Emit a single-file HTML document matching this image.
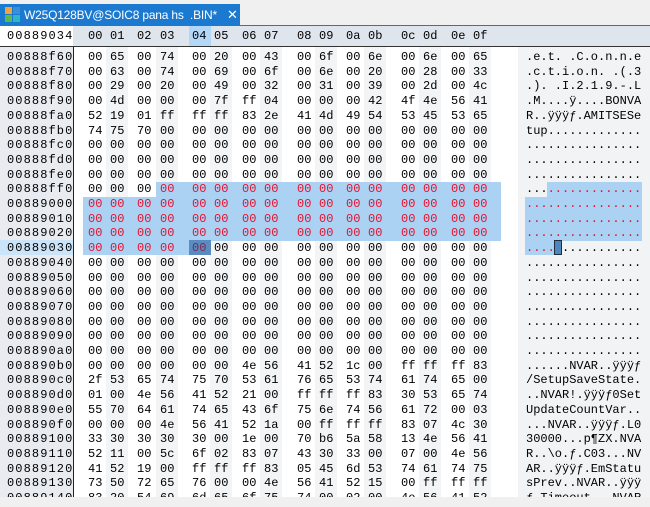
<!DOCTYPE html>
<html><head><meta charset="utf-8"><style>
body{margin:0;width:650px;height:507px;overflow:hidden;background:#fff;position:relative;font-family:"Liberation Mono",monospace;font-size:12px;color:#000}
.abs{position:absolute}
#tabbar{left:0;top:0;width:650px;height:26px;background:#f0f0f0}
#tab{left:0;top:4px;width:240px;height:22px;background:#1b79d0;color:#fff;font-family:"Liberation Sans",sans-serif;font-size:12px;line-height:22px}
#tline{left:0;top:25px;width:650px;height:1px;background:#1b79d0}
#hdr{left:0;top:26px;width:650px;height:20px;background:#dfe5ec;border-bottom:1px solid #333}
#hdr0{left:0;top:26px;width:73px;height:20px;background:#fff;line-height:20px;letter-spacing:1.1px;text-indent:7px}
#addrbg{left:0;top:47px;width:73px;height:460px;background:#e8ecf1;border-right:1px solid #222}
#ascbg{left:518px;top:47px;width:132px;height:460px;background:#f2f3f5}
.st{top:47px;width:22px;height:460px;background:#f2f4f6}
.r{position:absolute;left:0;width:650px;height:14.7px;line-height:14.7px}
.r span{position:absolute;top:0}
.r span:nth-child(1){left:7px;letter-spacing:1.1px}
.r span:nth-child(2){left:88px}.r span:nth-child(3){left:110px}.r span:nth-child(4){left:137px}.r span:nth-child(5){left:160px}
.r span:nth-child(6){left:192px}.r span:nth-child(7){left:214px}.r span:nth-child(8){left:242px}.r span:nth-child(9){left:264px}
.r span:nth-child(10){left:297px}.r span:nth-child(11){left:319px}.r span:nth-child(12){left:346px}.r span:nth-child(13){left:368px}
.r span:nth-child(14){left:401px}.r span:nth-child(15){left:423px}.r span:nth-child(16){left:451px}.r span:nth-child(17){left:473px}
.r span:nth-child(18){left:526px;white-space:pre}
.x{color:#e8112d}
b{font-weight:normal;color:#e8112d}
.sel{background:#abd1f3}
#foot{left:0;top:497px;width:650px;height:10px;background:#f0f0f0}
</style></head><body>
<div id="tabbar" class="abs"></div>
<div id="tab" class="abs">
<svg class="abs" style="left:5px;top:3px" width="16" height="16" viewBox="0 0 16 16"><rect x="0" y="0" width="7" height="7" fill="#f2a33a"/><rect x="8" y="0" width="7" height="7" fill="#3b8fd9"/><rect x="0" y="8" width="7" height="7" fill="#5bb84a"/><rect x="8" y="8" width="7" height="7" fill="#2fb5c9"/></svg>
<span class="abs" style="left:24px;top:0;white-space:pre;letter-spacing:-0.2px">W25Q128BV@SOIC8 pana hs  .BIN*</span>
<span class="abs" style="left:227px;top:0;font-size:13px">✕</span>
</div>
<div id="tline" class="abs"></div>
<div id="hdr" class="abs"></div>
<div class="abs" style="left:189px;top:26px;width:22px;height:20px;background:#b3d7f7"></div>
<div id="hdr0" class="abs">00889034</div>
<div class="r" style="top:29px">
<span></span><span>00</span><span>01</span><span>02</span><span>03</span><span>04</span><span>05</span><span>06</span><span>07</span><span>08</span><span>09</span><span>0a</span><span>0b</span><span>0c</span><span>0d</span><span>0e</span><span>0f</span>
</div>
<div id="addrbg" class="abs"></div>
<div id="ascbg" class="abs"></div>
<div class="abs st" style="left:106px"></div><div class="abs st" style="left:156px"></div><div class="abs st" style="left:210px"></div><div class="abs st" style="left:260px"></div>
<div class="abs st" style="left:315px"></div><div class="abs st" style="left:364px"></div><div class="abs st" style="left:419px"></div><div class="abs st" style="left:469px"></div>
<div class="abs" style="left:0;top:240.3px;width:73px;height:14.7px;background:#cce4f7"></div>
<div class="abs sel" style="left:156px;top:182px;width:345px;height:15px"></div>
<div class="abs sel" style="left:83px;top:196.5px;width:418px;height:44px"></div>
<div class="abs sel" style="left:83px;top:240.3px;width:106px;height:14.7px"></div>
<div class="abs" style="left:189px;top:240.3px;width:22px;height:14.7px;background:#5a8cc2"></div>
<div class="abs sel" style="left:547px;top:182px;width:95px;height:15px"></div>
<div class="abs sel" style="left:525px;top:196.5px;width:117px;height:44px"></div>
<div class="abs sel" style="left:525px;top:240.3px;width:29px;height:14.7px"></div>
<div class="abs" style="left:554px;top:240.3px;width:6px;height:13px;background:#4f86be;border:1px solid #1e2e40"></div>

<div class="r" style="top:50px"><span>00888f60</span><span>00</span><span>65</span><span>00</span><span>74</span><span>00</span><span>20</span><span>00</span><span>43</span><span>00</span><span>6f</span><span>00</span><span>6e</span><span>00</span><span>6e</span><span>00</span><span>65</span><span>.e.t. .C.o.n.n.e</span></div>
<div class="r" style="top:64.7px"><span>00888f70</span><span>00</span><span>63</span><span>00</span><span>74</span><span>00</span><span>69</span><span>00</span><span>6f</span><span>00</span><span>6e</span><span>00</span><span>20</span><span>00</span><span>28</span><span>00</span><span>33</span><span>.c.t.i.o.n. .(.3</span></div>
<div class="r" style="top:79.4px"><span>00888f80</span><span>00</span><span>29</span><span>00</span><span>20</span><span>00</span><span>49</span><span>00</span><span>32</span><span>00</span><span>31</span><span>00</span><span>39</span><span>00</span><span>2d</span><span>00</span><span>4c</span><span>.). .I.2.1.9.-.L</span></div>
<div class="r" style="top:94.1px"><span>00888f90</span><span>00</span><span>4d</span><span>00</span><span>00</span><span>00</span><span>7f</span><span>ff</span><span>04</span><span>00</span><span>00</span><span>00</span><span>42</span><span>4f</span><span>4e</span><span>56</span><span>41</span><span>.M....ÿ....BONVA</span></div>
<div class="r" style="top:108.8px"><span>00888fa0</span><span>52</span><span>19</span><span>01</span><span>ff</span><span>ff</span><span>ff</span><span>83</span><span>2e</span><span>41</span><span>4d</span><span>49</span><span>54</span><span>53</span><span>45</span><span>53</span><span>65</span><span>R..ÿÿÿƒ.AMITSESe</span></div>
<div class="r" style="top:123.5px"><span>00888fb0</span><span>74</span><span>75</span><span>70</span><span>00</span><span>00</span><span>00</span><span>00</span><span>00</span><span>00</span><span>00</span><span>00</span><span>00</span><span>00</span><span>00</span><span>00</span><span>00</span><span>tup.............</span></div>
<div class="r" style="top:138.2px"><span>00888fc0</span><span>00</span><span>00</span><span>00</span><span>00</span><span>00</span><span>00</span><span>00</span><span>00</span><span>00</span><span>00</span><span>00</span><span>00</span><span>00</span><span>00</span><span>00</span><span>00</span><span>................</span></div>
<div class="r" style="top:152.9px"><span>00888fd0</span><span>00</span><span>00</span><span>00</span><span>00</span><span>00</span><span>00</span><span>00</span><span>00</span><span>00</span><span>00</span><span>00</span><span>00</span><span>00</span><span>00</span><span>00</span><span>00</span><span>................</span></div>
<div class="r" style="top:167.6px"><span>00888fe0</span><span>00</span><span>00</span><span>00</span><span>00</span><span>00</span><span>00</span><span>00</span><span>00</span><span>00</span><span>00</span><span>00</span><span>00</span><span>00</span><span>00</span><span>00</span><span>00</span><span>................</span></div>
<div class="r" style="top:182.3px"><span>00888ff0</span><span>00</span><span>00</span><span>00</span><span class="x">00</span><span class="x">00</span><span class="x">00</span><span class="x">00</span><span class="x">00</span><span class="x">00</span><span class="x">00</span><span class="x">00</span><span class="x">00</span><span class="x">00</span><span class="x">00</span><span class="x">00</span><span class="x">00</span><span>...<b>.............</b></span></div>
<div class="r" style="top:197px"><span>00889000</span><span class="x">00</span><span class="x">00</span><span class="x">00</span><span class="x">00</span><span class="x">00</span><span class="x">00</span><span class="x">00</span><span class="x">00</span><span class="x">00</span><span class="x">00</span><span class="x">00</span><span class="x">00</span><span class="x">00</span><span class="x">00</span><span class="x">00</span><span class="x">00</span><span><b>................</b></span></div>
<div class="r" style="top:211.7px"><span>00889010</span><span class="x">00</span><span class="x">00</span><span class="x">00</span><span class="x">00</span><span class="x">00</span><span class="x">00</span><span class="x">00</span><span class="x">00</span><span class="x">00</span><span class="x">00</span><span class="x">00</span><span class="x">00</span><span class="x">00</span><span class="x">00</span><span class="x">00</span><span class="x">00</span><span><b>................</b></span></div>
<div class="r" style="top:226.4px"><span>00889020</span><span class="x">00</span><span class="x">00</span><span class="x">00</span><span class="x">00</span><span class="x">00</span><span class="x">00</span><span class="x">00</span><span class="x">00</span><span class="x">00</span><span class="x">00</span><span class="x">00</span><span class="x">00</span><span class="x">00</span><span class="x">00</span><span class="x">00</span><span class="x">00</span><span><b>................</b></span></div>
<div class="r" style="top:241.1px"><span>00889030</span><span class="x">00</span><span class="x">00</span><span class="x">00</span><span class="x">00</span><span style="color:#7a2a50">00</span><span>00</span><span>00</span><span>00</span><span>00</span><span>00</span><span>00</span><span>00</span><span>00</span><span>00</span><span>00</span><span>00</span><span><b>....</b> ...........</span></div>
<div class="r" style="top:255.8px"><span>00889040</span><span>00</span><span>00</span><span>00</span><span>00</span><span>00</span><span>00</span><span>00</span><span>00</span><span>00</span><span>00</span><span>00</span><span>00</span><span>00</span><span>00</span><span>00</span><span>00</span><span>................</span></div>
<div class="r" style="top:270.5px"><span>00889050</span><span>00</span><span>00</span><span>00</span><span>00</span><span>00</span><span>00</span><span>00</span><span>00</span><span>00</span><span>00</span><span>00</span><span>00</span><span>00</span><span>00</span><span>00</span><span>00</span><span>................</span></div>
<div class="r" style="top:285.2px"><span>00889060</span><span>00</span><span>00</span><span>00</span><span>00</span><span>00</span><span>00</span><span>00</span><span>00</span><span>00</span><span>00</span><span>00</span><span>00</span><span>00</span><span>00</span><span>00</span><span>00</span><span>................</span></div>
<div class="r" style="top:299.9px"><span>00889070</span><span>00</span><span>00</span><span>00</span><span>00</span><span>00</span><span>00</span><span>00</span><span>00</span><span>00</span><span>00</span><span>00</span><span>00</span><span>00</span><span>00</span><span>00</span><span>00</span><span>................</span></div>
<div class="r" style="top:314.6px"><span>00889080</span><span>00</span><span>00</span><span>00</span><span>00</span><span>00</span><span>00</span><span>00</span><span>00</span><span>00</span><span>00</span><span>00</span><span>00</span><span>00</span><span>00</span><span>00</span><span>00</span><span>................</span></div>
<div class="r" style="top:329.3px"><span>00889090</span><span>00</span><span>00</span><span>00</span><span>00</span><span>00</span><span>00</span><span>00</span><span>00</span><span>00</span><span>00</span><span>00</span><span>00</span><span>00</span><span>00</span><span>00</span><span>00</span><span>................</span></div>
<div class="r" style="top:344px"><span>008890a0</span><span>00</span><span>00</span><span>00</span><span>00</span><span>00</span><span>00</span><span>00</span><span>00</span><span>00</span><span>00</span><span>00</span><span>00</span><span>00</span><span>00</span><span>00</span><span>00</span><span>................</span></div>
<div class="r" style="top:358.7px"><span>008890b0</span><span>00</span><span>00</span><span>00</span><span>00</span><span>00</span><span>00</span><span>4e</span><span>56</span><span>41</span><span>52</span><span>1c</span><span>00</span><span>ff</span><span>ff</span><span>ff</span><span>83</span><span>......NVAR..ÿÿÿƒ</span></div>
<div class="r" style="top:373.4px"><span>008890c0</span><span>2f</span><span>53</span><span>65</span><span>74</span><span>75</span><span>70</span><span>53</span><span>61</span><span>76</span><span>65</span><span>53</span><span>74</span><span>61</span><span>74</span><span>65</span><span>00</span><span>/SetupSaveState.</span></div>
<div class="r" style="top:388.1px"><span>008890d0</span><span>01</span><span>00</span><span>4e</span><span>56</span><span>41</span><span>52</span><span>21</span><span>00</span><span>ff</span><span>ff</span><span>ff</span><span>83</span><span>30</span><span>53</span><span>65</span><span>74</span><span>..NVAR!.ÿÿÿƒ0Set</span></div>
<div class="r" style="top:402.8px"><span>008890e0</span><span>55</span><span>70</span><span>64</span><span>61</span><span>74</span><span>65</span><span>43</span><span>6f</span><span>75</span><span>6e</span><span>74</span><span>56</span><span>61</span><span>72</span><span>00</span><span>03</span><span>UpdateCountVar..</span></div>
<div class="r" style="top:417.5px"><span>008890f0</span><span>00</span><span>00</span><span>00</span><span>4e</span><span>56</span><span>41</span><span>52</span><span>1a</span><span>00</span><span>ff</span><span>ff</span><span>ff</span><span>83</span><span>07</span><span>4c</span><span>30</span><span>...NVAR..ÿÿÿƒ.L0</span></div>
<div class="r" style="top:432.2px"><span>00889100</span><span>33</span><span>30</span><span>30</span><span>30</span><span>30</span><span>00</span><span>1e</span><span>00</span><span>70</span><span>b6</span><span>5a</span><span>58</span><span>13</span><span>4e</span><span>56</span><span>41</span><span>30000...p¶ZX.NVA</span></div>
<div class="r" style="top:446.9px"><span>00889110</span><span>52</span><span>11</span><span>00</span><span>5c</span><span>6f</span><span>02</span><span>83</span><span>07</span><span>43</span><span>30</span><span>33</span><span>00</span><span>07</span><span>00</span><span>4e</span><span>56</span><span>R..\o.ƒ.C03...NV</span></div>
<div class="r" style="top:461.6px"><span>00889120</span><span>41</span><span>52</span><span>19</span><span>00</span><span>ff</span><span>ff</span><span>ff</span><span>83</span><span>05</span><span>45</span><span>6d</span><span>53</span><span>74</span><span>61</span><span>74</span><span>75</span><span>AR..ÿÿÿƒ.EmStatu</span></div>
<div class="r" style="top:476.3px"><span>00889130</span><span>73</span><span>50</span><span>72</span><span>65</span><span>76</span><span>00</span><span>00</span><span>4e</span><span>56</span><span>41</span><span>52</span><span>15</span><span>00</span><span>ff</span><span>ff</span><span>ff</span><span>sPrev..NVAR..ÿÿÿ</span></div>
<div class="r" style="top:491px"><span>00889140</span><span>83</span><span>20</span><span>54</span><span>69</span><span>6d</span><span>65</span><span>6f</span><span>75</span><span>74</span><span>00</span><span>02</span><span>00</span><span>4e</span><span>56</span><span>41</span><span>52</span><span>ƒ Timeout...NVAR</span></div>
<div id="foot" class="abs"></div>
</body></html>
